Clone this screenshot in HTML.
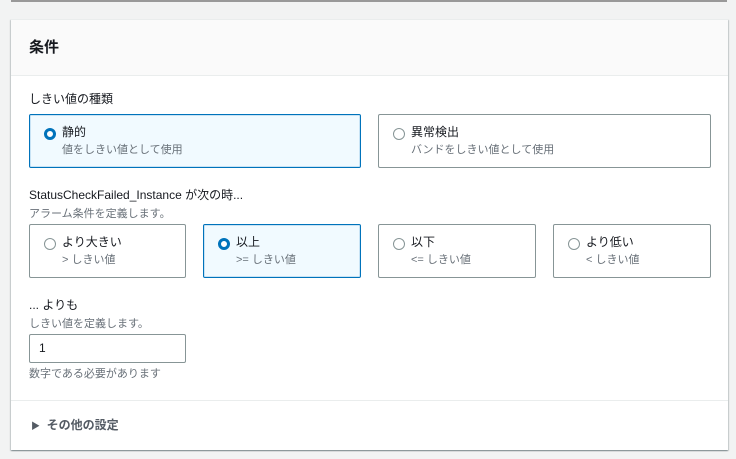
<!DOCTYPE html>
<html><head><meta charset="utf-8"><style>
*{box-sizing:border-box;margin:0;padding:0}
body{width:736px;height:459px;background:#f2f3f3;font-family:"Liberation Sans","Noto Sans CJK JP",sans-serif;color:#16191f;position:relative;overflow:hidden}
.top{position:absolute;left:11px;right:9px;top:0;height:2px;background:#999}
.card{position:absolute;left:11px;top:19px;width:717px;height:431px;background:#fff;border-top:1px solid #eaeded;box-shadow:0 1px 1px rgba(0,28,36,.3),1px 1px 1px rgba(0,28,36,.15),-1px 1px 1px rgba(0,28,36,.15)}
.hdr{height:56px;background:#fafafa;border-bottom:1px solid #eaeded;padding:16px 18px;font-size:15px;font-weight:bold}
.a{position:absolute;font-size:12px}
.s{color:#687078;font-size:11px}
.box{position:absolute;border:1px solid #879596;border-radius:2px;background:#fff;height:54px}
.box.sel{border-color:#0073bb;background:#f1faff;box-shadow:0 0 0 1px #c8e3f5 inset}
.r{position:absolute;left:14px;top:13px;width:12px;height:12px;border:1px solid #879596;border-radius:50%;background:#fff}
.sel .r{border:3px solid #0073bb}
.t{position:absolute;left:32px;top:8px;font-size:12px}
.d{position:absolute;left:32px;top:26px;font-size:11px;color:#687078}
.inp{position:absolute;left:29px;top:334px;width:157px;height:29px;border:1px solid #879596;border-radius:2px;padding:6px 9px;font-size:12px}
.div{position:absolute;left:11px;width:717px;top:400px;border-top:1px solid #eaeded}
</style></head><body>
<div class="top"></div>
<div class="card"><div class="hdr">条件</div></div>
<div class="a" style="left:29px;top:90px">しきい値の種類</div>
<div class="box sel" style="left:29px;top:114px;width:332px"><div class="r"></div><div class="t">静的</div><div class="d">値をしきい値として使用</div></div>
<div class="box" style="left:378px;top:114px;width:333px"><div class="r"></div><div class="t">異常検出</div><div class="d">バンドをしきい値として使用</div></div>
<div class="a" style="left:29px;top:186px">StatusCheckFailed_Instance が次の時...</div>
<div class="a s" style="left:29px;top:205px">アラーム条件を定義します。</div>
<div class="box" style="left:29px;top:224px;width:157px"><div class="r"></div><div class="t">より大きい</div><div class="d">&gt; しきい値</div></div>
<div class="box sel" style="left:203px;top:224px;width:158px"><div class="r"></div><div class="t">以上</div><div class="d">&gt;= しきい値</div></div>
<div class="box" style="left:378px;top:224px;width:158px"><div class="r"></div><div class="t">以下</div><div class="d">&lt;= しきい値</div></div>
<div class="box" style="left:553px;top:224px;width:158px"><div class="r"></div><div class="t">より低い</div><div class="d">&lt; しきい値</div></div>
<div class="a" style="left:29px;top:296px">... よりも</div>
<div class="a s" style="left:29px;top:315px">しきい値を定義します。</div>
<div class="inp">1</div>
<div class="a s" style="left:29px;top:365px">数字である必要があります</div>
<div class="div"></div>
<div class="a" style="left:31px;top:416px;font-weight:bold;color:#545b64"><span style="font-size:9px;color:#545b64">▶</span>&nbsp; その他の設定</div>
</body></html>
